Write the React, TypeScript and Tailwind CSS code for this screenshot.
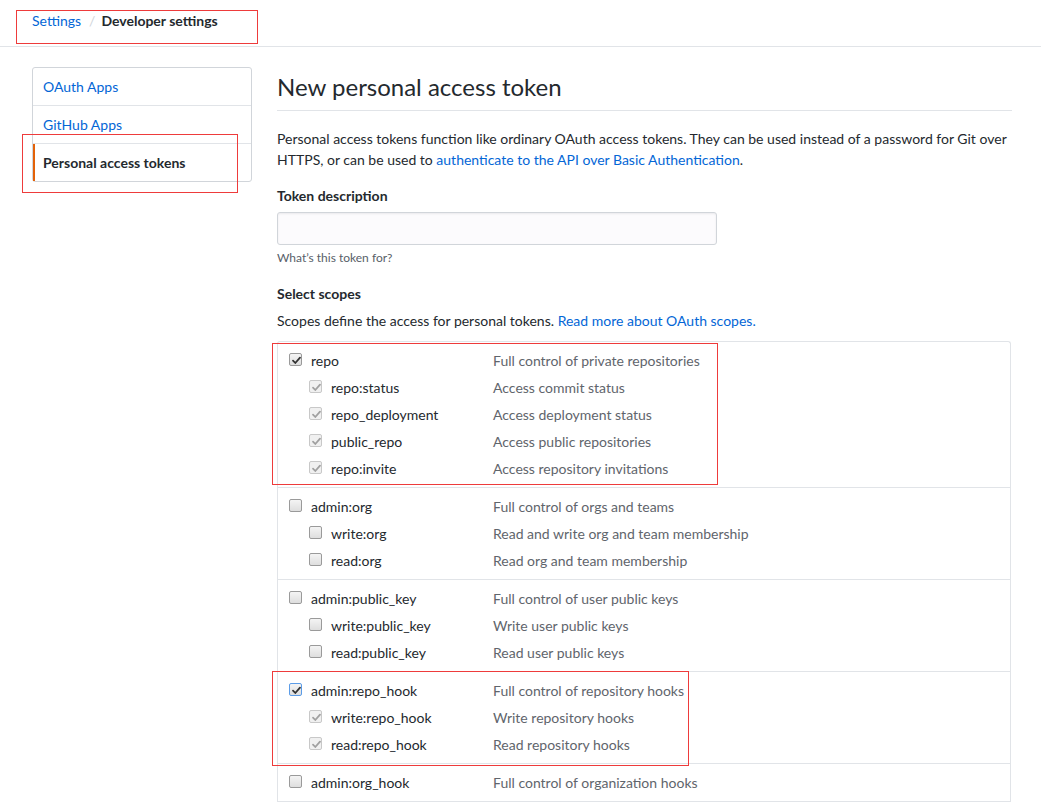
import type { ReactNode } from 'react'

type Scope = { name: string; desc: string }
type ScopeGroup = {
  parent: Scope
  children: Scope[]
  checked?: boolean
  focused?: boolean
}

const groups: ScopeGroup[] = [
  {
    parent: { name: 'repo', desc: 'Full control of private repositories' },
    children: [
      { name: 'repo:status', desc: 'Access commit status' },
      { name: 'repo_deployment', desc: 'Access deployment status' },
      { name: 'public_repo', desc: 'Access public repositories' },
      { name: 'repo:invite', desc: 'Access repository invitations' },
    ],
    checked: true,
  },
  {
    parent: { name: 'admin:org', desc: 'Full control of orgs and teams' },
    children: [
      { name: 'write:org', desc: 'Read and write org and team membership' },
      { name: 'read:org', desc: 'Read org and team membership' },
    ],
  },
  {
    parent: { name: 'admin:public_key', desc: 'Full control of user public keys' },
    children: [
      { name: 'write:public_key', desc: 'Write user public keys' },
      { name: 'read:public_key', desc: 'Read user public keys' },
    ],
  },
  {
    parent: { name: 'admin:repo_hook', desc: 'Full control of repository hooks' },
    children: [
      { name: 'write:repo_hook', desc: 'Write repository hooks' },
      { name: 'read:repo_hook', desc: 'Read repository hooks' },
    ],
    checked: true,
    focused: true,
  },
  {
    parent: { name: 'admin:org_hook', desc: 'Full control of organization hooks' },
    children: [],
  },
]

function Check({ dark }: { dark: boolean }) {
  return (
    <svg viewBox="0 0 13 13" className="absolute inset-0 h-[13px] w-[13px]">
      <path
        d="M3 6.6 L5.3 9 L10 3.6"
        fill="none"
        stroke={dark ? '#333' : '#a0a0a0'}
        strokeWidth="1.8"
        strokeLinecap="round"
        strokeLinejoin="round"
      />
    </svg>
  )
}

function Box({ checked, disabled, focused }: { checked?: boolean; disabled?: boolean; focused?: boolean }) {
  const border = focused ? 'border-[#5b9ce8]' : disabled ? 'border-[#c8c8c8]' : 'border-[#9a9a9a]'
  const bg = disabled ? 'bg-[#f0f0f0]' : 'bg-gradient-to-b from-[#f4f4f4] to-[#dedede]'
  return (
    <span className={`relative inline-block h-[13px] w-[13px] shrink-0 rounded-[2px] border ${border} ${bg}`}>
      {checked ? <Check dark={!disabled} /> : null}
    </span>
  )
}

function Row({ scope, child, checked, focused, disabled }: {
  scope: Scope
  child?: boolean
  checked?: boolean
  focused?: boolean
  disabled?: boolean
}) {
  return (
    <div className="flex h-[27px] items-center">
      <div className={`flex w-[204px] items-center ${child ? 'pl-[20px]' : ''}`}>
        <span className="-mt-[2px] flex">
          <Box checked={checked} disabled={disabled} focused={focused} />
        </span>
        <span className="ml-[9px] text-[#24292e]">{scope.name}</span>
      </div>
      <span className="text-[#5f656c]">{scope.desc}</span>
    </div>
  )
}

function Annot({ className }: { className: string }): ReactNode {
  return <div className={`pointer-events-none absolute border border-[#ee3b3b] ${className}`} />
}

export default function App() {
  return (
    <div className="relative min-h-[806px] bg-white text-[14px] text-[#24292e] font-['Lato','Liberation_Sans',sans-serif]">
      {/* breadcrumb */}
      <div className="h-[47px] border-b border-[#e1e4e8] pl-[32px] pt-[10px]">
        <div className="flex items-center leading-[21px]">
          <span className="text-[#0366d6]">Settings</span>
          <span className="ml-[8px] mr-[6px] text-[#d1d5da]">/</span>
          <span className="font-bold">Developer settings</span>
        </div>
      </div>

      <div className="flex gap-[25px] pl-[32px] pt-[20px]">
        {/* sidebar */}
        <nav className="w-[220px] self-start rounded-[3px] border border-[#d1d5da]">
          <div className="flex h-[38px] items-center border-b border-[#e1e4e8] pl-[10px] text-[#0366d6]">OAuth Apps</div>
          <div className="flex h-[38px] items-center border-b border-[#e1e4e8] pl-[10px] text-[#0366d6]">GitHub Apps</div>
          <div className="flex h-[37px] items-center border-l-2 border-[#e36209] pl-[8px] font-bold">Personal access tokens</div>
        </nav>

        {/* main */}
        <main className="w-[735px]">
          <h1 className="mt-[5px] border-b border-[#e1e4e8] pb-[8px] text-[24px] font-normal leading-[30px]">
            New personal access token
          </h1>
          <p className="mt-[17px] leading-[21px]">
            Personal access tokens function like ordinary OAuth access tokens. They can be used instead of a password for Git over
            HTTPS, or can be used to <a className="text-[#0366d6]">authenticate to the API over Basic Authentication</a>.
          </p>

          <div className="mt-[15px] font-bold leading-[21px]">Token description</div>
          <div className="mt-[6px] h-[33px] w-[440px] rounded-[3px] border border-[#d1d5da] bg-[#fcfbfd] shadow-[inset_0_1px_2px_rgba(27,31,35,0.075)]" />
          <div className="mt-[4px] text-[12px] leading-[18px] text-[#586069]">What’s this token for?</div>

          <div className="mt-[16px] font-bold leading-[21px]">Select scopes</div>
          <p className="mt-[6px] leading-[21px]">
            Scopes define the access for personal tokens. <a className="text-[#0366d6]">Read more about OAuth scopes.</a>
          </p>

          <div className="mt-[10px] w-[734px] rounded-t-[3px] border border-b-0 border-[#e1e4e8]">
            {groups.map((g) => (
              <div key={g.parent.name} className="border-b border-[#e1e4e8] pl-[11px] pt-[5px] pb-[5px]">
                <Row scope={g.parent} checked={g.checked} focused={g.focused} />
                {g.children.map((c) => (
                  <Row key={c.name} scope={c} child checked={g.checked} disabled={g.checked} />
                ))}
              </div>
            ))}
          </div>
        </main>
      </div>

      {/* red annotation boxes */}
      <Annot className="left-[16px] top-[10px] h-[34px] w-[242px]" />
      <Annot className="left-[22px] top-[134px] h-[59px] w-[216px]" />
      <Annot className="left-[272px] top-[343px] h-[142px] w-[446px]" />
      <Annot className="left-[272px] top-[671px] h-[95px] w-[417px]" />
    </div>
  )
}
